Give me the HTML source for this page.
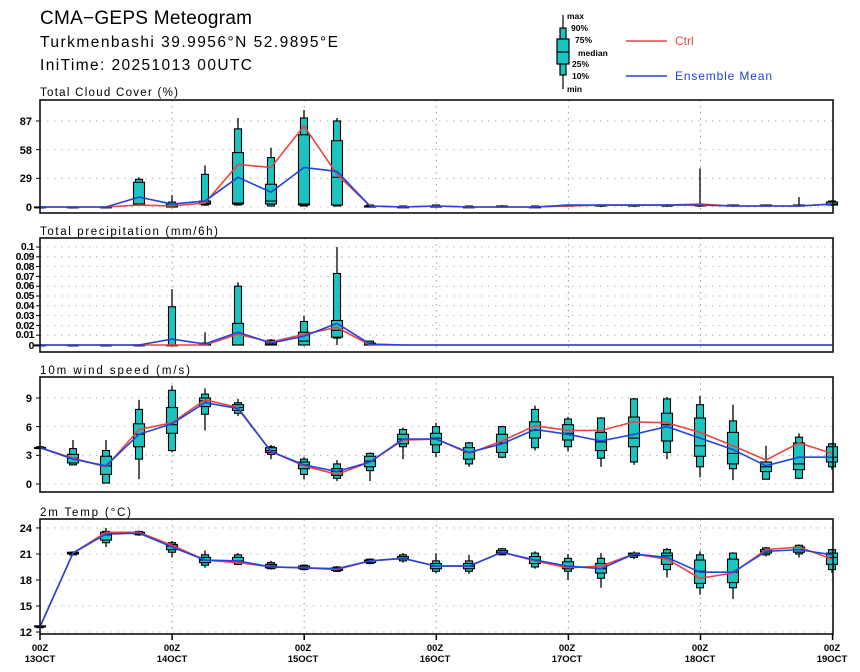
<!DOCTYPE html>
<html><head><meta charset="utf-8"><style>
html,body{margin:0;padding:0;background:#fff;width:860px;height:672px;overflow:hidden}
svg{display:block}
text{font-family:"Liberation Sans",sans-serif}
</style></head><body>
<svg id="s" width="860" height="672" xmlns="http://www.w3.org/2000/svg">
<text x="40" y="24" font-size="19" fill="#000" textLength="212" lengthAdjust="spacing">CMA−GEPS Meteogram</text>
<text x="40" y="47" font-size="15.5" fill="#000" textLength="298" lengthAdjust="spacing">Turkmenbashi 39.9956°N 52.9895°E</text>
<text x="40" y="70" font-size="15.5" fill="#000" textLength="212" lengthAdjust="spacing">IniTime: 20251013 00UTC</text>
<g font-size="11.5" fill="#000">
<text x="40" y="96" textLength="138" lengthAdjust="spacing">Total Cloud Cover (%)</text>
<text x="40" y="235" textLength="178" lengthAdjust="spacing">Total precipitation (mm/6h)</text>
<text x="40" y="374" textLength="150" lengthAdjust="spacing">10m wind speed (m/s)</text>
<text x="40" y="516" textLength="91" lengthAdjust="spacing">2m Temp (°C)</text>
</g>
<g font-size="11" font-weight="bold" text-anchor="end" fill="#000">
<text x="32" y="125">87</text><text x="32" y="154">58</text><text x="32" y="182">29</text><text x="32" y="211">0</text>
<text x="32" y="402">9</text><text x="32" y="431">6</text><text x="32" y="459">3</text><text x="32" y="488">0</text>
<text x="32" y="532">24</text><text x="32" y="558">21</text><text x="32" y="584">18</text><text x="32" y="610">15</text><text x="32" y="636">12</text>
</g>
<g font-size="10.5" font-weight="bold" text-anchor="end" fill="#000" letter-spacing="-0.5">
<text x="34" y="250">0.1</text><text x="34" y="260">0.09</text><text x="34" y="270">0.08</text><text x="34" y="280">0.07</text><text x="34" y="289">0.06</text><text x="34" y="299">0.05</text><text x="34" y="309">0.04</text><text x="34" y="319">0.03</text><text x="34" y="329">0.02</text><text x="34" y="338">0.01</text><text x="34" y="349">0</text>
</g>
<g font-size="9.5" font-weight="bold" text-anchor="middle" fill="#000">
<text x="40" y="651">00Z</text><text x="40" y="662">13OCT</text>
<text x="172" y="651">00Z</text><text x="172" y="662">14OCT</text>
<text x="303" y="651">00Z</text><text x="303" y="662">15OCT</text>
<text x="435" y="651">00Z</text><text x="435" y="662">16OCT</text>
<text x="567" y="651">00Z</text><text x="567" y="662">17OCT</text>
<text x="700" y="651">00Z</text><text x="700" y="662">18OCT</text>
<text x="832" y="651">00Z</text><text x="832" y="662">19OCT</text>
</g>
<!-- legend -->
<g stroke="#000" stroke-width="1.2">
<line x1="563" y1="15" x2="563" y2="89"/>
<rect x="560" y="28" width="6" height="47" fill="#1cc4c0"/>
<rect x="557" y="39" width="12" height="25" fill="#1cc4c0"/>
<line x1="557" y1="52" x2="569" y2="52"/>
</g>
<g font-size="8.5" font-weight="bold" fill="#000">
<text x="567" y="19">max</text><text x="571" y="31">90%</text><text x="575" y="43">75%</text><text x="578" y="56">median</text><text x="572" y="67">25%</text><text x="572" y="79">10%</text><text x="567" y="92">min</text>
</g>
<line x1="626" y1="41" x2="667" y2="41" stroke="#e84444" stroke-width="1.5"/>
<line x1="626" y1="76" x2="667" y2="76" stroke="#2244dd" stroke-width="1.5"/>
<text x="675" y="45" font-size="12" fill="#e84444">Ctrl</text>
<text x="675" y="80" font-size="12" fill="#2244dd" textLength="97" lengthAdjust="spacing">Ensemble Mean</text>
</svg>
<script>
var S=document.getElementById('s'),NS='http://www.w3.org/2000/svg';
function el(t,a){var e=document.createElementNS(NS,t);for(var k in a)e.setAttribute(k,a[k]);S.appendChild(e);return e;}
function X(i){return 40+33.0*i;}
var P=[
 {t:100,b:213,y:function(v){return 207-v*0.989},g:[0,29,58,87],
  d:[[0,0,0,0,0,0,0,0,0],[0,0,0,0,0,0,0,0,0],[0,0,0,0,0,0,0,0,0],
  [1,2,2,3,25,28,30,2,10],[0,0,0,1,3,5,12,1,3],[1,2,3,4,6,33,42,4,6],
  [2,2,3,4,55,79,90,43,30],[1,1,3,6,23,50,60,40,15],[1,1,2,3,73,90,98,82,40],
  [1,1,2,30,67,87,90,33,36],[0,0,0,1,1,2,2,1,1],[0,0,0,0,0,1,1,0,0],
  [0,0,0,1,1,2,2,1,1],[0,0,0,0,0,1,1,0,0],[0,0,0,0,1,1,2,0,0],[0,0,0,0,0,1,1,0,0],
  [0,1,1,1,2,2,2,1,2],[0,1,1,1,2,2,2,2,2],[0,1,1,2,2,2,2,2,2],[0,1,1,2,2,2,3,2,2],
  [0,1,2,2,2,3,39,3,2],[0,1,1,1,2,2,2,1,1],[0,1,1,1,2,2,2,1,1],[0,1,1,1,2,2,10,1,1],[1,2,2,3,5,6,7,3,3]]},
 {t:238,b:352,y:function(v){return 345-v*980},g:[0,.01,.02,.03,.04,.05,.06,.07,.08,.09,.1],
  d:[[0,0,0,0,0,0,0,0,0],[0,0,0,0,0,0,0,0,0],[0,0,0,0,0,0,0,0,0],[0,0,0,0,0,0,0,0,0],
  [0,0,0,0,0,.039,.057,0,.006],[0,0,0,0,.001,.002,.013,0,.001],[0,0,0,0,.022,.06,.064,.011,.013],
  [0,0,0,.001,.004,.005,.006,.003,.002],[0,0,0,.004,.013,.024,.03,.011,.009],
  [0,.007,.008,.015,.025,.073,.1,.018,.022],[0,0,0,0,.002,.004,.004,0,.001]]},
 {t:377,b:492,y:function(v){return 484-v*9.56},g:[0,3,6,9],
  d:[[3.7,3.7,3.8,3.8,3.8,3.9,3.9,3.8,3.8],[2,2,2.2,2.7,3.1,3.7,4.6,2.7,2.6],[.1,.1,1,1.9,2.9,3.5,4.6,1.8,1.9],
  [.5,2.6,3.9,5.2,6.3,7.8,8.8,5.7,5.2],[3.3,3.5,5.3,6.2,8,9.8,10.3,6.4,6.3],[5.6,7.3,8.1,8.7,9,9.4,10,8.8,8.5],
  [7.1,7.4,7.7,8,8.3,8.5,8.9,8,7.9],[2.6,3.1,3.3,3.5,3.8,3.9,4.1,3.4,3.4],[.5,1,1.6,2,2.3,2.6,2.8,1.9,2],
  [.3,.6,.9,1.3,1.6,2.1,2.5,1,1.3],[.3,1.4,1.8,2.4,2.9,3.2,3.3,2.3,2.3],[2.6,3.9,4.2,4.7,5.2,5.7,5.9,4.6,4.7],
  [2.8,3.3,4.1,4.8,5.3,6,6.4,4.7,4.7],[1.8,2.1,2.6,3.3,3.8,4.3,4.4,3.2,3.3],[2.7,2.8,3.3,4.3,5.2,6,6.1,4.5,4.2],
  [3.5,3.8,4.8,5.6,6.5,7.8,8.2,6.1,5.7],[3.4,3.9,4.6,5.3,6.2,6.8,7,5.6,5.2],[1.8,2.7,3.5,4.4,5.4,6.9,7,5.6,4.5],
  [2,2.3,3.9,4.8,7,8.9,9,6.5,5.2],[2.6,3.3,4.5,6.2,7.4,8.9,9.1,6.4,6],[.7,1.8,2.9,4,6.9,8.3,9.2,5.4,4.8],
  [.4,1.6,2.1,3.2,5.4,6.6,8.3,4,3.6],[.5,.5,1.3,1.8,2.3,2.3,4,2.5,1.9],[.5,.6,1.5,2.1,4.3,4.9,5.3,4.3,2.8],[1.5,1.8,2.3,2.8,3.9,4.2,4.3,3.2,2.8]]},
 {t:519,b:634,y:function(v){return 632-(v-12)*8.67},g:[12,15,18,21,24],
  d:[[12.5,12.5,12.6,12.6,12.7,12.7,12.7,12.6,12.6],[20.9,20.9,21,21.1,21.2,21.2,21.3,21.1,21.1],[21.8,22.3,22.6,23.2,23.5,23.6,24,23.5,23.3],
  [23.1,23.2,23.3,23.4,23.5,23.6,23.7,23.5,23.4],[20.6,21.2,21.5,21.9,22.1,22.3,22.5,22,21.8],[19.4,19.7,20,20.3,20.6,20.9,21.4,20.3,20.3],
  [19.7,19.8,20,20.2,20.6,20.9,21.1,20,20.2],[19.2,19.3,19.4,19.6,19.8,20,20.2,19.5,19.5],[19.1,19.2,19.3,19.4,19.6,19.7,19.8,19.4,19.4],
  [18.9,19,19.1,19.2,19.4,19.5,19.6,19.2,19.3],[19.8,19.9,20,20.2,20.3,20.4,20.5,20.2,20.2],[20,20.2,20.4,20.5,20.7,20.9,21.1,20.5,20.5],
  [18.8,19,19.3,19.6,19.9,20.2,21.1,19.6,19.6],[18.7,19,19.3,19.6,19.9,20.2,20.9,19.6,19.6],[20.9,20.9,21,21.2,21.4,21.6,21.7,21.2,21.2],
  [19.3,19.5,19.9,20.3,20.7,21.1,21.3,20.2,20.3],[18,19,19.3,19.6,20.1,20.5,21,19.4,19.6],[17.1,18.2,18.8,19.3,19.9,20.5,21.1,19.6,19.3],
  [20.4,20.6,20.8,21,21.1,21.1,21.3,21,21],[18.3,19.2,19.8,20.8,21.1,21.5,21.7,20.4,20.6],[16.3,17.1,17.6,19,20.3,20.9,21.3,18.2,18.9],
  [15.8,17.1,17.7,18.9,20.4,21.1,21.2,18.8,18.9],[20.7,20.9,21.1,21.3,21.5,21.7,21.8,21.5,21.3],[20.6,21,21.2,21.5,21.8,22,22.1,21.8,21.5],[18.8,19.2,19.8,20.6,21.1,21.5,21.6,20.4,20.9]]}
];
var F='#1cc4c0';
P.forEach(function(p){
  p.g.forEach(function(v){var y=p.y(v);el('line',{x1:40,x2:833,y1:y,y2:y,stroke:'#aaa','stroke-width':0.8,'stroke-dasharray':'1.5 5.5'});
    el('line',{x1:36,x2:40,y1:y,y2:y,stroke:'#000','stroke-width':1});});
  for(var d=1;d<6;d++){var x=40+132.1*d;el('line',{x1:x,x2:x,y1:p.t,y2:p.b,stroke:'#999','stroke-width':1,'stroke-dasharray':'1.5 4.5'});}
  p.d.forEach(function(a,i){
    var x=X(i),y=p.y;
    el('line',{x1:x,x2:x,y1:y(a[6]),y2:y(a[0]),stroke:'#000','stroke-width':1.3});
    var h=Math.max(y(a[1])-y(a[5]),0.8);
    el('rect',{x:x-3.5,y:y(a[5]),width:7,height:h,fill:F,stroke:'#000','stroke-width':1.1});
    var h2=Math.max(y(a[2])-y(a[4]),0.8);
    el('rect',{x:x-5.5,y:y(a[4]),width:11,height:h2,fill:F,stroke:'#000','stroke-width':1.1});
    el('line',{x1:x-5.5,x2:x+5.5,y1:y(a[3]),y2:y(a[3]),stroke:'#000','stroke-width':1.1});
  });
  var N=25,r=[],b=[];
  for(var i=0;i<N;i++){var a=p.d[i]||[0,0,0,0,0,0,0,0,0];r.push(X(i)+','+p.y(a[7]));b.push(X(i)+','+p.y(a[8]));}
  el('polyline',{points:r.join(' '),fill:'none',stroke:'#e84444','stroke-width':1.6});
  el('polyline',{points:b.join(' '),fill:'none',stroke:'#2244dd','stroke-width':1.6});
  el('rect',{x:40,y:p.t,width:793,height:p.b-p.t,fill:'none',stroke:'#111','stroke-width':1.6});
});
for(var d=0;d<7;d++){var x=40+132.1*d;el('line',{x1:x,x2:x,y1:634,y2:640,stroke:'#000','stroke-width':1.5});}
</script>
</body></html>
